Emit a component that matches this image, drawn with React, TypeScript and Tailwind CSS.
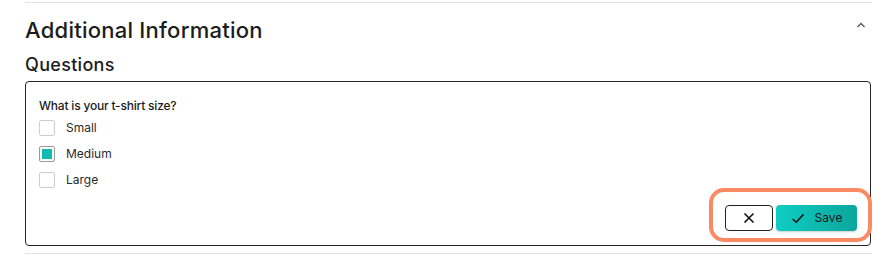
import { useState } from "react";

const options = ["Small", "Medium", "Large"];

function Checkbox({ checked }: { checked: boolean }) {
  return (
    <span
      className={`flex h-4 w-4 items-center justify-center rounded-[2px] border ${
        checked ? "border-[#9a9a9a]" : "border-[#cfcfcf]"
      } bg-white`}
    >
      {checked && <span className="h-[10px] w-[10px] bg-[#10bbb3]" />}
    </span>
  );
}

export default function App() {
  const [selected, setSelected] = useState("Medium");

  return (
    <div className="h-[256px] w-[884px] bg-white font-['Inter',sans-serif] text-[#1c1c1c]">
      <div className="ml-[25px] mr-[12px] mt-[2px] border-y border-[#e3e3e3] pb-[7px]">
        <div className="flex items-start justify-between">
          <h2 className="mt-[13px] text-[22px] font-medium leading-[28px] tracking-[0.25px]">
            Additional Information
          </h2>
          <svg
            className="mr-[6px] mt-[18px] h-[8px] w-[10px]"
            viewBox="0 0 10 8"
            fill="none"
            stroke="#555"
            strokeWidth="1.3"
          >
            <path d="M1.5 6 L5 2.5 L8.5 6" />
          </svg>
        </div>
        <h3 className="mt-[10px] text-[18px] font-medium leading-[22px] tracking-[0.3px]">Questions</h3>
        <div className="mr-px mt-[5px] flex h-[165px] flex-col rounded-[4px] border-[1.5px] border-[#262626] px-[13px] pb-[14px] pt-[16px]">
          <p className="text-[12px] font-medium leading-[16px] tracking-[-0.2px]">
            What is your t-shirt size?
          </p>
          <div className="mt-[6px] flex flex-col gap-[10px]">
            {options.map((o) => (
              <label
                key={o}
                className="flex cursor-pointer items-center gap-[11px]"
                onClick={() => setSelected(o)}
              >
                <Checkbox checked={selected === o} />
                <span className="text-[12px] leading-[16px] text-[#2a2a2a]">{o}</span>
              </label>
            ))}
          </div>
          <div className="mt-auto flex justify-end">
            <div className="relative flex gap-[3px]">
              <span className="pointer-events-none absolute -bottom-[11px] -left-[16px] -right-[15px] -top-[17px] rounded-[15px] border-[4px] border-[#f98a63]" />
              <button className="flex h-[26px] w-[48px] items-center justify-center rounded-[4px] border border-[#222] bg-white">
                <svg viewBox="0 0 12 12" className="h-[12px] w-[12px]" stroke="#111" strokeWidth="1.6" fill="none">
                  <path d="M1.5 1.5 L10.5 10.5 M10.5 1.5 L1.5 10.5" />
                </svg>
              </button>
              <button className="flex h-[26px] w-[81px] items-center justify-center gap-[10px] rounded-[4px] bg-gradient-to-r from-[#10cdc3] to-[#0ba69c] text-[12px] text-[#1a1a1a] shadow-[0_1px_2px_rgba(0,0,0,0.2)]">
                <svg viewBox="0 0 14 12" className="h-[11px] w-[14px]" stroke="#111" strokeWidth="1.6" fill="none">
                  <path d="M1 6.5 L5 10 L13 1.5" />
                </svg>
                Save
              </button>
            </div>
          </div>
        </div>
      </div>
    </div>
  );
}
